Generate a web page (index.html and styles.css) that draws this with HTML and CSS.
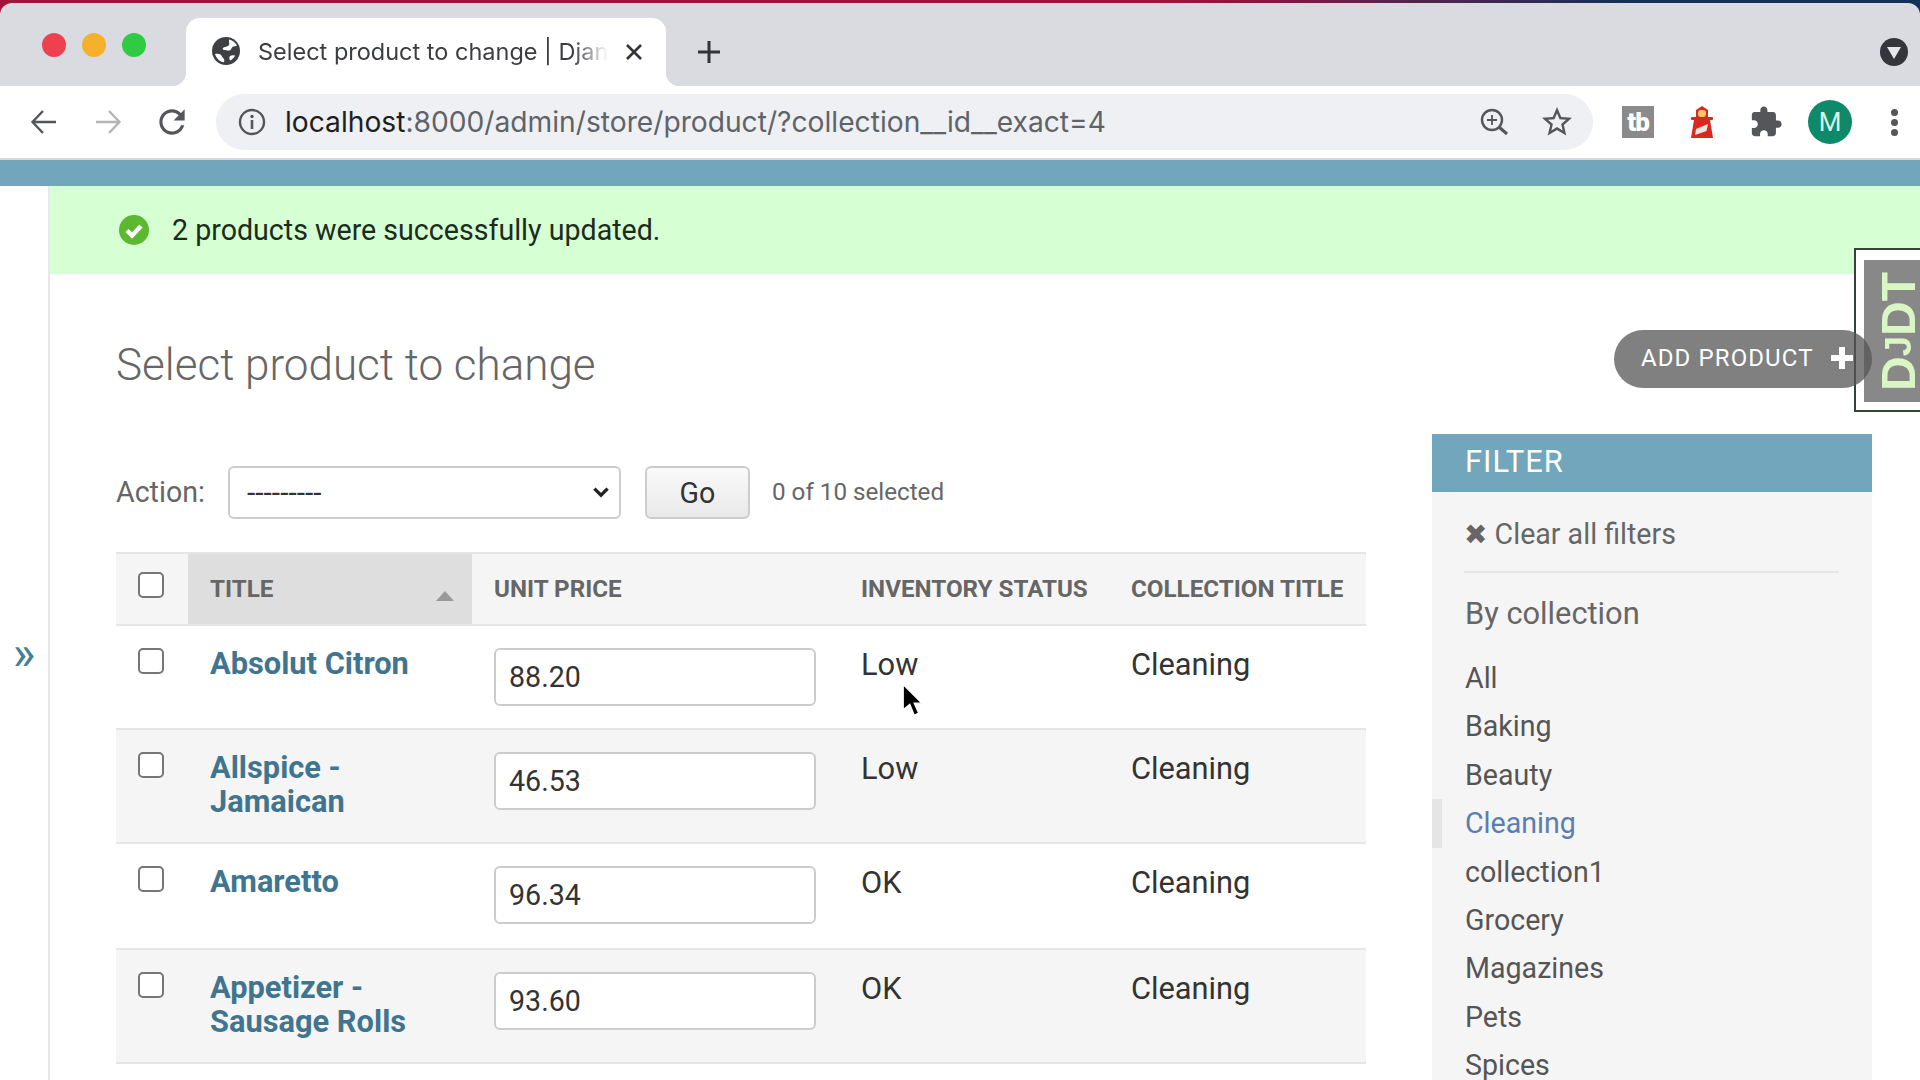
FILE: index.html
```html
<!DOCTYPE html>
<html lang="en">
<head>
    <meta charset="UTF-8">
    <title>Select product to change | Django site admin</title>
    <link rel="stylesheet" href="styles.css">
</head>
<body>
    <div class="browser">
        <div class="tabstrip">
            <div class="traffic">
                <span class="light red"></span>
                <span class="light amber"></span>
                <span class="light green"></span>
            </div>
            <div class="tab">
                <svg class="favicon" viewBox="0 0 28 28">
                    <circle cx="14" cy="14" r="14" fill="#3f4044"/>
                    <path d="M17 2.500c3 .6 6.500 3 8 6-1.500 1-3 .6-4.500 1.500-1.500 1-1 3-3 3.500-2 .4-3.500-.5-5-.5-1.500 0-2.500-1.500-1-2.500 2-1 4.500-.8 5.500-2.500 1-1.500-.5-3 0-5.500z" fill="#fff"/>
                    <path d="M3 17c2-.5 4-.5 5.500.5 1.500 1 1.500 3 3 4 1 .8 1 2.500.5 3.800C8 25 4.500 21.500 3 17z" fill="#fff"/>
                    <path d="M18 19c1.500-.8 3.500-1 5-.3-1 2-3 4-5 4.800-.8-1.500-1-3.500 0-4.500z" fill="#fff"/>
                </svg>
                <span class="tab-title">Select product to change | Django site admin</span>
                <svg class="tab-close" viewBox="0 0 20 20"><path d="M3 3l14 14M17 3L3 17" stroke="#333438" stroke-width="2.600" fill="none"/></svg>
            </div>
            <svg class="new-tab" viewBox="0 0 26 26"><path d="M13 2v22M2 13h22" stroke="#333438" stroke-width="3" fill="none"/></svg>
            <div class="tabstrip-fill"></div>
            <div class="tab-search"><svg viewBox="0 0 14 12"><path d="M0 0h14L7 12z" fill="#e6e7ea"/></svg></div>
        </div>
        <div class="toolbar">
            <div class="tool">
                <svg viewBox="0 0 30 30"><path d="M27 15H4M14 4L3.500 15 14 26" stroke="#54565a" stroke-width="2.400" fill="none"/></svg>
            </div>
            <div class="tool">
                <svg viewBox="0 0 30 30"><path d="M3 15h23M16 4l10.500 11L16 26" stroke="#b4b5b8" stroke-width="2.400" fill="none"/></svg>
            </div>
            <div class="tool">
                <svg viewBox="0 0 24 24" class="reload"><path fill="#54565a" d="M17.650 6.350C16.200 4.900 14.210 4 12 4c-4.420 0-7.990 3.580-7.990 8s3.570 8 7.990 8c3.730 0 6.840-2.550 7.730-6h-2.080c-.82 2.330-3.040 4-5.650 4-3.310 0-6-2.690-6-6s2.690-6 6-6c1.660 0 3.140.69 4.220 1.780L13 11h7V4l-2.350 2.350z"/></svg>
            </div>
            <div class="omnibox">
                <svg class="info" viewBox="0 0 28 28">
                    <circle cx="14" cy="14" r="12" stroke="#54565a" stroke-width="2.400" fill="none"/>
                    <circle cx="14" cy="8.500" r="1.700" fill="#54565a"/>
                    <path d="M14 12v9" stroke="#54565a" stroke-width="2.600"/>
                </svg>
                <span class="url"><span class="url-host">localhost</span>:8000/admin/store/product/?collection__id__exact=4</span>
                <svg class="omni-icon" viewBox="0 0 28 28">
                    <circle cx="12" cy="12" r="10" stroke="#54565a" stroke-width="2.400" fill="none"/>
                    <path d="M12 7v10M7 12h10" stroke="#54565a" stroke-width="1.800"/>
                    <path d="M19 19l8 7" stroke="#54565a" stroke-width="3"/>
                </svg>
                <svg class="omni-icon star" viewBox="0 0 24 24"><path fill="#54565a" d="M22 9.240l-7.190-.62L12 2 9.190 8.630 2 9.240l5.460 4.730L5.820 21 12 17.270 18.180 21l-1.630-7.030L22 9.240zM12 15.400l-3.760 2.270 1-4.280-3.320-2.880 4.380-.38L12 6.100l1.710 4.040 4.380.38-3.320 2.880 1 4.280L12 15.400z"/></svg>
            </div>
            <div class="extensions">
                <div class="ext"><span class="ext-tb">tb</span></div>
                <div class="ext">
                    <svg class="lighthouse" viewBox="0 0 22 32">
                        <path d="M11 0l6 4v7H5V4z" fill="#d8281f"/>
                        <rect x="7" y="4" width="8" height="7" rx="3" fill="#f6c667"/>
                        <rect x="0" y="11" width="22" height="3" rx="1" fill="#d8281f"/>
                        <path d="M3 14h16l3 18H0z" fill="#d8281f"/>
                        <path d="M5 23l12-5-1.500 7L4 29z" fill="#f1e6dd"/>
                    </svg>
                </div>
                <div class="ext">
                    <svg class="puzzle" viewBox="0 0 24 24"><path fill="#54565a" d="M20.500 11H19V7c0-1.100-.9-2-2-2h-4V3.500C13 2.120 11.880 1 10.500 1S8 2.120 8 3.500V5H4c-1.100 0-1.990.9-1.990 2v3.800H3.500c1.490 0 2.700 1.210 2.700 2.700s-1.210 2.700-2.700 2.700H2V20c0 1.100.9 2 2 2h3.800v-1.500c0-1.490 1.210-2.700 2.700-2.700 1.490 0 2.700 1.210 2.700 2.700V22H17c1.100 0 2-.9 2-2v-4h1.500c1.380 0 2.500-1.120 2.500-2.500S21.880 11 20.500 11z"/></svg>
                </div>
                <div class="ext"><span class="avatar">M</span></div>
                <div class="ext">
                    <div class="dots"><i></i><i></i><i></i></div>
                </div>
            </div>
        </div>
    </div>

    <div class="admin-header"></div>

    <div class="admin-body">
        <div class="nav-toggle">&raquo;</div>
        <main class="content">
            <div class="message">
                <svg class="message-icon" viewBox="0 0 30 30">
                    <circle cx="15" cy="15" r="15" fill="#5cb82e"/>
                    <path d="M8 15.500l5 5 9-9.500" stroke="#fff" stroke-width="4.500" fill="none"/>
                </svg>
                <span>2 products were successfully updated.</span>
            </div>
            <div class="title-row">
                <h1>Select product to change</h1>
                <a class="add-btn">ADD PRODUCT<b class="add-plus"></b></a>
            </div>
            <div class="changelist">
                <div class="results">
                    <div class="actions">
                        <label>Action:</label>
                        <div class="select">
                            <span>---------</span>
                            <svg viewBox="0 0 16 10"><path d="M2 1.500l6 6 6-6" stroke="#222" stroke-width="3" fill="none"/></svg>
                        </div>
                        <button class="go">Go</button>
                        <span class="counter">0 of 10 selected</span>
                    </div>
                    <table class="products">
                        <colgroup>
                            <col class="col-check"><col class="col-title"><col class="col-price"><col class="col-status"><col class="col-coll">
                        </colgroup>
                        <thead>
                            <tr>
                                <th class="check-cell"><span class="checkbox"></span></th>
                                <th class="sorted"><div class="sorted-inner">Title<i class="sort-up"></i></div></th>
                                <th>Unit price</th>
                                <th>Inventory status</th>
                                <th>Collection title</th>
                            </tr>
                        </thead>
                        <tbody>
                            <tr>
                                <td class="check-cell"><span class="checkbox"></span></td>
                                <td><a class="name">Absolut Citron</a></td>
                                <td><input class="price" value="88.20"></td>
                                <td>Low</td>
                                <td>Cleaning</td>
                            </tr>
                            <tr class="alt">
                                <td class="check-cell"><span class="checkbox"></span></td>
                                <td><a class="name">Allspice - Jamaican</a></td>
                                <td><input class="price" value="46.53"></td>
                                <td>Low</td>
                                <td>Cleaning</td>
                            </tr>
                            <tr class="roomy">
                                <td class="check-cell"><span class="checkbox"></span></td>
                                <td><a class="name">Amaretto</a></td>
                                <td><input class="price" value="96.34"></td>
                                <td>OK</td>
                                <td>Cleaning</td>
                            </tr>
                            <tr class="alt">
                                <td class="check-cell"><span class="checkbox"></span></td>
                                <td><a class="name">Appetizer - Sausage Rolls</a></td>
                                <td><input class="price" value="93.60"></td>
                                <td>OK</td>
                                <td>Cleaning</td>
                            </tr>
                        </tbody>
                    </table>
                </div>
                <aside class="filter">
                    <h2>FILTER</h2>
                    <div class="filter-body">
                        <div class="clear"><span class="clear-x">&#10006;</span> Clear all filters</div>
                        <h3>By collection</h3>
                        <ul>
                            <li>All</li>
                            <li>Baking</li>
                            <li>Beauty</li>
                            <li class="selected">Cleaning</li>
                            <li>collection1</li>
                            <li>Grocery</li>
                            <li>Magazines</li>
                            <li>Pets</li>
                            <li>Spices</li>
                        </ul>
                    </div>
                </aside>
            </div>
        </main>
    </div>

    <div class="djdt"><div class="djdt-inner"><span>D<small>J</small>DT</span></div></div>
    <svg class="cursor" viewBox="0 0 20 32"><path d="M2 1v23l6-5 4 10 4-2-4-9h7z" fill="#000" stroke="#fff" stroke-width="1.200"/></svg>
</body>
</html>
```
FILE: styles.css
```css
html, body {margin: 0; padding: 0; height: 100%; overflow: hidden;}
body {background: #fff; font-family: "Roboto", sans-serif; color: #333; display: flex; flex-direction: column;}

/* browser chrome */
.browser {flex: none; background: linear-gradient(90deg, #a5123a 0%, #a5123a 60%, #12305a 85%); padding-top: 3px;}
.tabstrip {display: flex; align-items: flex-end; height: 83px; background: #d9dbe0; border-radius: 12px 12px 0 0;}
.traffic {display: flex; gap: 16px; padding: 15px 0 0 42px; width: 186px; height: 68px; box-sizing: border-box; flex: none;}
.light {width: 24px; height: 24px; border-radius: 50%;}
.light.red {background: #ee4150;}
.light.amber {background: #f5b02c;}
.light.green {background: #2fcb42;}
.tab {position: relative; display: flex; align-items: center; width: 480px; height: 68px; flex: none; background: #fff; border-radius: 14px 14px 0 0; padding: 0 20px 0 26px; box-sizing: border-box;}
.tab::before, .tab::after {content: ""; position: absolute; bottom: 0; width: 14px; height: 14px; background: radial-gradient(circle at 0 0, #d9dbe0 14px, #fff 14.500px);}
.tab::before {left: -14px;}
.tab::after {right: -14px; background: radial-gradient(circle at 100% 0, #d9dbe0 14px, #fff 14.500px);}
.favicon {width: 28px; height: 28px; flex: none; margin-bottom: 2px;}
.tab-title {margin: 0 0 2px 18px; width: 350px; flex: none; font-family: "Inter", sans-serif; font-size: 23.500px; color: #3c3d41; white-space: nowrap; overflow: hidden; -webkit-mask-image: linear-gradient(90deg, #000 90%, transparent 100%); mask-image: linear-gradient(90deg, #000 90%, transparent 100%);}
.tab-close {width: 20px; height: 20px; margin-left: 16px; flex: none;}
.new-tab {width: 26px; height: 26px; margin: 0 0 21px 30px; flex: none;}
.tabstrip-fill {flex: 1;}
.tab-search {width: 28px; height: 28px; border-radius: 50%; background: #35363c; margin: 0 12px 20px 0; display: flex; align-items: center; justify-content: center;}
.tab-search svg {width: 14px; height: 12px; margin-top: 2px;}

.toolbar {display: flex; align-items: center; height: 72px; background: #fff; border-bottom: 2px solid #d6d8de; padding-left: 12px; overflow: hidden;}
.tool {width: 64px; flex: none; display: flex; justify-content: center;}
.tool svg {width: 30px; height: 30px;}
.tool svg.reload {width: 38px; height: 38px;}
.omnibox {flex: none; display: flex; align-items: center; width: 1377px; height: 56px; box-sizing: border-box; margin-left: 12px; padding: 0 18px 0 22px; background: #eef0f3; border-radius: 28px;}
.info {width: 28px; height: 28px; flex: none;}
.url {flex: 1; margin-left: 19px; font-family: "Inter", sans-serif; font-size: 28.200px; color: #5f6368; white-space: nowrap;}
.url-host {color: #1d1e20;}
.omni-icon {width: 28px; height: 28px; flex: none; margin-right: 31px;}
.omni-icon.star {width: 36px; height: 36px; margin-right: 0;}
.extensions {display: flex; flex: none; margin-left: 13px;}
.ext {width: 64px; flex: none; display: flex; justify-content: center; align-items: center;}
.ext-tb {width: 32px; height: 32px; background: #8a8a8a; color: #fff; font-weight: 900; font-size: 26px; line-height: 32px; text-align: center; letter-spacing: -1px;}
.lighthouse {width: 22px; height: 32px;}
.puzzle {width: 34px; height: 34px;}
.avatar {width: 44px; height: 44px; border-radius: 50%; background: #0f8a68; color: #d5f1e8; font-size: 26px; line-height: 44px; text-align: center;}
.dots {display: flex; flex-direction: column; gap: 3px;}
.dots i {display: block; width: 7px; height: 7px; border-radius: 50%; background: #54565a;}

/* django admin */
.admin-header {flex: none; height: 26px; background: #71a6bd;}
.admin-body {flex: 1; display: flex; min-height: 0;}
.nav-toggle {flex: none; width: 48px; border-right: 2px solid #e8e8e8; display: flex; align-items: center; justify-content: center; font-size: 48px; color: #447e9b; padding-top: 40px; box-sizing: content-box;}
.content {flex: 1; min-width: 0;}

.message {display: flex; align-items: center; height: 88px; background: #d6ffd4; padding-left: 69px; font-size: 28.600px; color: #1c2c1c;}
.message-icon {width: 30px; height: 30px; margin-right: 23px;}

.title-row {display: flex; justify-content: space-between; align-items: flex-start; padding: 56px 48px 0 66px;}
h1 {margin: 0; padding-top: 12px; font-size: 44px; line-height: 46px; font-weight: 300; color: #666;}
.add-btn {position: relative; z-index: 2; display: flex; align-items: center; height: 58px; width: 258px; box-sizing: border-box; padding: 0 0 2px 27px; border-radius: 29px; background: rgba(85, 85, 85, .75); color: #fff; font-size: 24px; letter-spacing: 1.100px;}
.add-plus {position: relative; width: 22px; height: 22px; margin-left: 17px; background: linear-gradient(#fff, #fff) center/6px 22px no-repeat, linear-gradient(#fff, #fff) center/22px 6px no-repeat;}

.changelist {display: flex; gap: 66px; padding: 46px 48px 0 66px;}
.results {flex: none; width: 1250px; padding-top: 32px;}
.actions {display: flex; align-items: center; height: 53px; margin-bottom: 33px;}
.actions label {width: 112px; flex: none; font-size: 28.600px; color: #666; padding-bottom: 1px;}
.select {display: flex; align-items: center; justify-content: space-between; width: 393px; height: 53px; flex: none; box-sizing: border-box; border: 2px solid #ccc; border-radius: 6px; padding: 0 9px 0 17px; background: #fff; color: #333; font-size: 30px;}
.select svg {width: 18px; height: 11px;}
.go {width: 105px; height: 53px; margin-left: 24px; border: 2px solid #ccc; border-radius: 6px; background: linear-gradient(#fafafa, #e9e9e9); font-family: "Roboto", sans-serif; font-size: 28.600px; color: #333;}
.counter {margin-left: 22px; font-size: 24.200px; color: #666; padding-bottom: 1px;}

.products {width: 1250px; table-layout: fixed; border-collapse: separate; border-spacing: 0; font-size: 30.800px;}
.col-check {width: 72px;}
.col-title {width: 284px;}
.col-price {width: 367px;}
.col-status {width: 270px;}
.col-coll {width: 257px;}
.products th {height: 74px; box-sizing: border-box; padding: 0 0 0 22px; background: #f5f5f5; border-top: 2px solid #e6e6e6; border-bottom: 2px solid #e6e6e6; text-align: left; text-transform: uppercase; font-size: 24.200px; font-weight: 700; color: #666;}
.products th.sorted {background: #dedede;}
.products th.check-cell {padding: 0 0 8px 22px;}
.sorted-inner {display: flex; justify-content: space-between; align-items: center; padding-right: 18px;}
.sort-up {width: 0; height: 0; margin-top: 14px; border-left: 9px solid transparent; border-right: 9px solid transparent; border-bottom: 10px solid #999;}
.products td {padding: 22px 0 22px 22px; vertical-align: top; line-height: 33px; border-bottom: 2px solid #e6e6e6; color: #333;}
.products tr.alt td {padding-bottom: 23px; background: #f5f5f5;}
.products tr.roomy td {padding-bottom: 24px;}
.checkbox {display: block; width: 22px; height: 22px; border: 2px solid #767676; border-radius: 5px; background: #fff;}
.name {display: block; margin-top: -1px; padding-right: 40px; line-height: 34px; font-weight: 700; color: #41758f;}
.price {display: block; width: 322px; height: 58px; box-sizing: border-box; border: 2px solid #ccc; border-radius: 6px; padding: 0 13px; background: #fff; font-family: "Roboto", sans-serif; font-size: 28.600px; color: #333;}

.filter {flex: none; width: 440px;}
.filter h2 {margin: 0; height: 58px; line-height: 56px; padding-left: 33px; background: #71a6bd; color: #fff; font-size: 30.800px; font-weight: 400; letter-spacing: 1px;}
.filter-body {background: #f5f5f5; padding: 22px 33px 0; color: #666;}
.clear {padding-bottom: 17px; border-bottom: 2px solid #e6e6e6; font-size: 28.600px; line-height: 40px; margin-left: -1px;}
.clear-x {font-family: "DejaVu Sans", sans-serif; font-size: 28px; line-height: 28px;}
.filter h3 {margin: 20px 0 0; font-size: 30.800px; font-weight: 400; line-height: 42px; color: #666;}
.filter ul {list-style: none; margin: 19px 0 0; padding: 0;}
.filter li {position: relative; height: 48.400px; line-height: 48px; font-size: 28.600px; color: #555;}
.filter li.selected {color: #5b7db0;}
.filter li.selected::before {content: ""; position: absolute; left: -33px; top: 0; bottom: 0; width: 10px; background: #e5e5e5;}

/* debug toolbar handle and pointer, both float over the page */
.djdt {position: absolute; left: 1854px; top: 248px; z-index: 1; width: 66px; height: 164px; box-sizing: border-box; border: 2px solid #34443a; border-right: 0; padding: 10px 0 8px 8px; background: #fff;}
.djdt-inner {height: 100%; background: #888; overflow: hidden; display: flex; align-items: center; padding-left: 14px;}
.djdt-inner span {flex: none; writing-mode: vertical-rl; transform: rotate(180deg); font-family: "Liberation Sans", sans-serif; font-weight: 700; font-size: 48px; line-height: 42px; color: #d9f6c4;}
.djdt-inner small {font-size: 76%;}
.cursor {position: absolute; left: 901px; top: 683px; z-index: 3; width: 22px; height: 36px;}
```
